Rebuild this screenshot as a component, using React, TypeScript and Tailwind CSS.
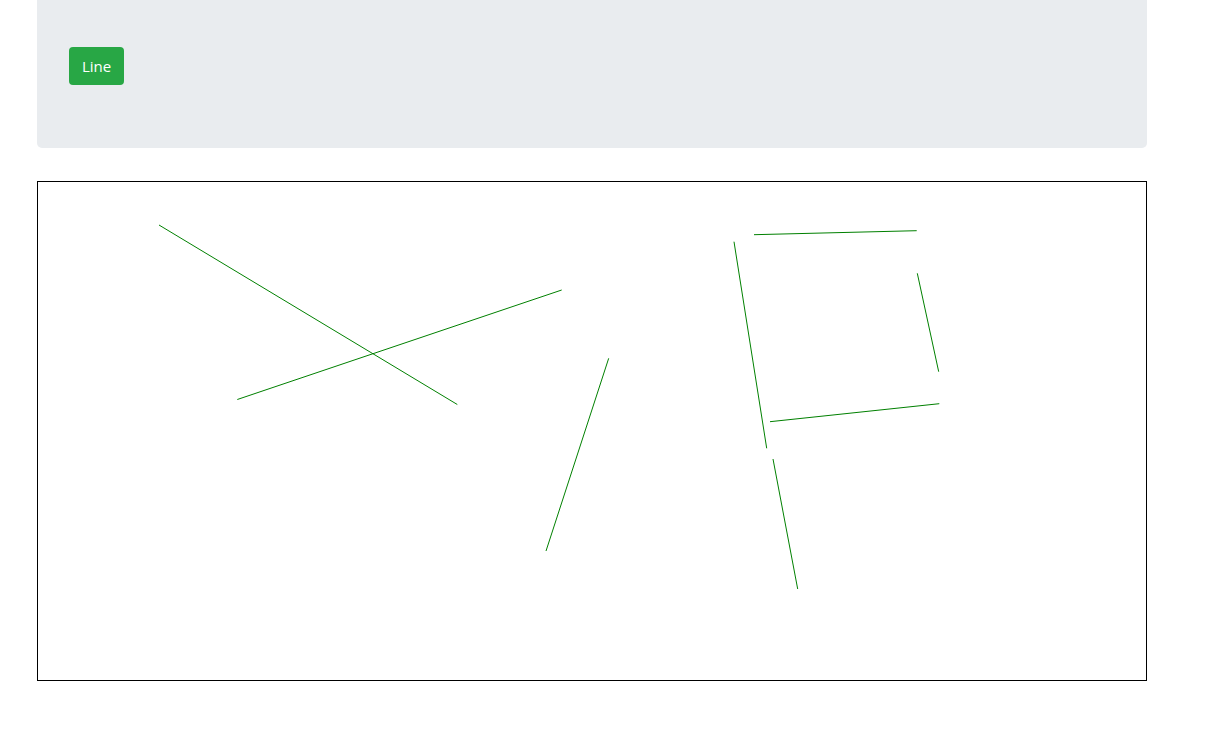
export default function App() {
  const lines: [number, number, number, number][] = [
    [159, 225, 457.3, 404.5],
    [237.3, 399.5, 561.7, 290],
    [608.7, 358.3, 546, 551],
    [754, 234.7, 916.7, 230.7],
    [734, 241.7, 766.7, 448.3],
    [917.3, 273.3, 938.7, 371.7],
    [770, 421.7, 939.3, 403.7],
    [773, 459, 797.7, 589],
  ];
  return (
    <div className="min-h-[742px] bg-white" style={{ fontFamily: '"Open Sans", "Liberation Sans", sans-serif' }}>
      <div className="ml-[37px] w-[1110px] h-[148px] bg-[#e9ecef] rounded-b-[5px] pt-[47px] pl-[32px]">
        <button className="w-[55px] h-[38px] bg-[#28a745] text-white text-[15px] rounded-[4px] flex items-center justify-center">
          Line
        </button>
      </div>
      <div className="ml-[37px] mt-[33px] w-[1110px] h-[500px] border border-black">
        <svg width="1108" height="498" viewBox="38 182 1108 498" className="block">
          {lines.map(([x1, y1, x2, y2], i) => (
            <line key={i} x1={x1} y1={y1} x2={x2} y2={y2} stroke="#008000" strokeWidth="1" />
          ))}
        </svg>
      </div>
    </div>
  );
}
